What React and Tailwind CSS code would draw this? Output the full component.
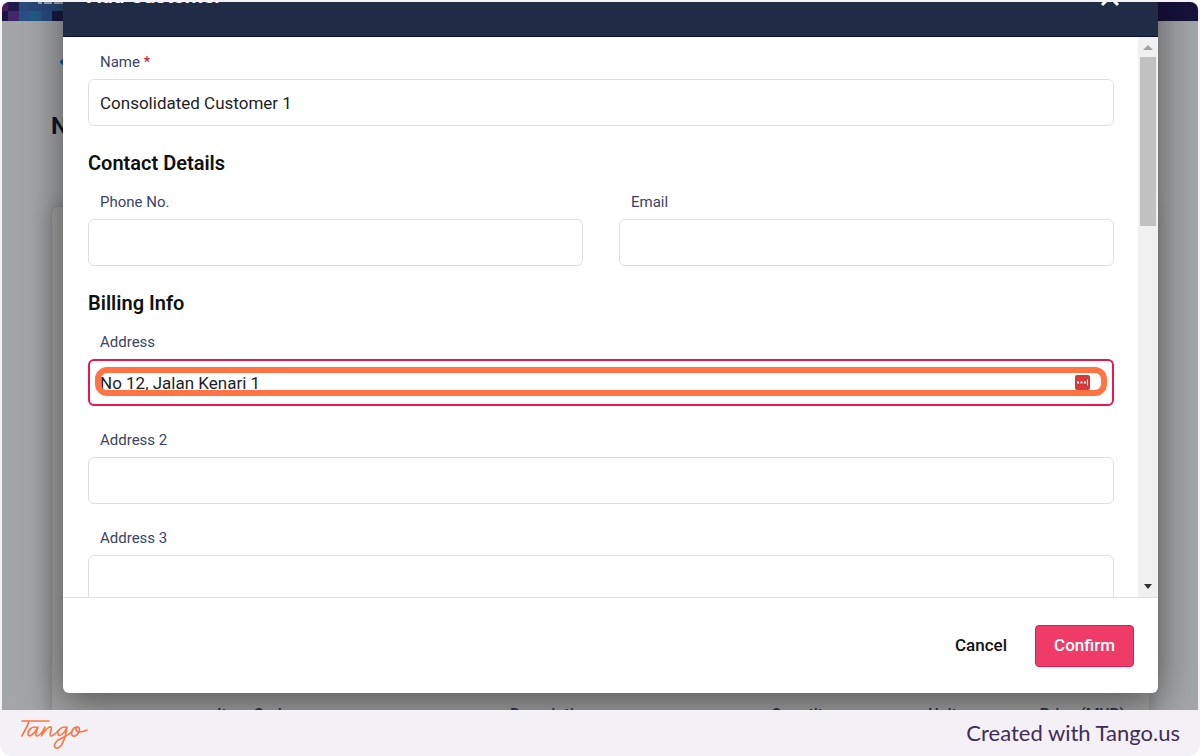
import { useState } from 'react';

const itemColumns = [
  { label: 'Item Code', className: 'w-[288px] pl-[165px] text-left' },
  { label: 'Description', className: 'w-[260px] pl-[170px] text-left' },
  { label: 'Quantity', className: 'text-right' },
  { label: 'Unit', className: 'w-[126px] text-right' },
  { label: 'Price (MYR)', className: 'w-[192px] pr-6 text-right' }
];

const bannerTiles = [
  { x: 0, y: 0, fill: '#4a1d58' },
  { x: 6, y: 0, fill: '#1f1a4e' },
  { x: 17, y: 0, fill: '#284a7d' },
  { x: 28, y: 0, fill: '#27487c' },
  { x: 39, y: 0, fill: '#27477c' },
  { x: 50, y: 0, fill: '#254a78' },
  { x: 0, y: 9, fill: '#1b1546' },
  { x: 6, y: 9, fill: '#44276a' },
  { x: 17, y: 9, fill: '#285184' },
  { x: 28, y: 9, fill: '#245a87' },
  { x: 39, y: 9, fill: '#264c80' },
  { x: 50, y: 9, fill: '#191845' }
];

function Banner() {
  return (
    <div className="h-[19px] shrink-0 overflow-hidden bg-[#16123c]">
      <svg width="61" height="19" aria-hidden="true">
        {bannerTiles.map((tile) => (
          <rect key={`${tile.x}-${tile.y}`} x={tile.x} y={tile.y} width="12" height="10" fill={tile.fill} />
        ))}
        <path d="M36 0h4v2h-4zM42 0h8v2h-8zM52 0h9v2h-9z" fill="#9aa5b8" />
      </svg>
    </div>
  );
}

function BackgroundPage() {
  return (
    <div className="flex h-full flex-col bg-[#a3a5a7]">
      <Banner />
      <div className="flex grow flex-col pr-12 pl-[49px]">
        <a href="#back" aria-label="Back" className="mt-[33px] ml-[9px] flex h-4 w-4 items-center">
          <svg width="16" height="10" viewBox="0 0 16 10" aria-hidden="true">
            <path d="M5 1 1 5l4 4M1 5h14" fill="none" stroke="#0b4f9c" strokeWidth="2" />
          </svg>
        </a>
        <h1 className="mt-10 text-2xl leading-8 font-bold text-[#10152b]">New Invoice</h1>
        <div className="mt-16 grow rounded-t-md border border-b-0 border-[#8f9092] bg-[#a2a2a2] pt-[496px] shadow-[0_0_20px_rgba(0,0,0,0.2)]">
          <table className="w-full table-fixed text-base leading-6 text-[#2e3452]">
            <thead>
              <tr>
                {itemColumns.map((column) => (
                  <th key={column.label} className={`font-medium whitespace-nowrap ${column.className}`}>
                    {column.label}
                  </th>
                ))}
              </tr>
            </thead>
          </table>
        </div>
      </div>
    </div>
  );
}

function Field({ id, label, value, onChange, required, focused, children }) {
  return (
    <div className="flex min-w-0 flex-1 flex-col gap-1">
      <label htmlFor={id} className="pl-3 text-[15px] leading-[26px] text-[#3a4466]">
        {label}
        {required ? <span className="text-[#c8102e]"> *</span> : null}
      </label>
      <div className="relative">
        <input
          id={id}
          type="text"
          value={value}
          onChange={(event) => onChange(id, event.target.value)}
          className={`block h-[47px] w-full rounded-md bg-white text-[17px] text-[#1d1d1f] outline-none ${
            focused ? 'border-2 border-[#e8174f] px-[10px]' : 'border border-[#dfe0e2] px-[11px]'
          }`}
        />
        {children}
      </div>
    </div>
  );
}

function PasswordManagerBadge() {
  return (
    <svg width="15" height="15" viewBox="0 0 15 15" className="absolute top-4 right-6" aria-hidden="true">
      <rect width="15" height="15" rx="2" fill="#d63a3a" />
      <path d="M2 6.500h2v2H2zM5.500 6.500h2v2h-2zM9 6.500h2v2H9z" fill="#fff" />
      <path d="M12.500 4.500v6" stroke="#fff" strokeWidth="1" />
    </svg>
  );
}

function ScrollTrack() {
  return (
    <div className="flex w-5 shrink-0 flex-col justify-between bg-[#f0f0f0] pl-[2px]" aria-hidden="true">
      <div className="flex w-4 flex-col items-center">
        <svg width="10" height="20" viewBox="0 0 10 20">
          <path d="M0 13h10L5 8z" fill="#a0a0a0" />
        </svg>
        <div className="h-[169px] w-4 bg-[#c1c1c1]" />
      </div>
      <div className="flex w-4 justify-center">
        <svg width="10" height="20" viewBox="0 0 10 20">
          <path d="M1 7h8l-4 5z" fill="#333" />
        </svg>
      </div>
    </div>
  );
}

function AddCustomerModal() {
  const [form, setForm] = useState({
    name: 'Consolidated Customer 1',
    phone: '',
    email: '',
    address: 'No 12, Jalan Kenari 1',
    address2: '',
    address3: ''
  });

  function handleChange(id, value) {
    setForm((current) => ({ ...current, [id]: value }));
  }

  return (
    <div
      role="dialog"
      aria-label="Add Customer"
      className="absolute -top-[45px] right-10 bottom-[17px] left-[61px] flex flex-col rounded-md bg-white shadow-[0_8px_40px_rgba(0,0,0,0.5)]"
    >
      <header className="flex h-20 shrink-0 items-center justify-between border-b border-[#0a1038] bg-[#222b45] px-6 text-white">
        <h2 className="text-[21px] font-semibold">Add Customer</h2>
        <button type="button" aria-label="Close" className="mr-[14px]">
          <svg width="20" height="20" viewBox="0 0 20 20" aria-hidden="true">
            <path d="M2 2l16 16M18 2 2 18" stroke="#fff" strokeWidth="3" />
          </svg>
        </button>
      </header>

      <div className="flex min-h-0 flex-1">
        <form className="flex min-w-0 flex-1 flex-col gap-[23px] overflow-hidden pt-3 pr-6 pl-[25px]">
          <Field id="name" label="Name" value={form.name} onChange={handleChange} required />

          <section className="flex flex-col gap-3">
            <h3 className="text-xl leading-7 font-semibold text-[#111]">Contact Details</h3>
            <div className="flex gap-9">
              <Field id="phone" label="Phone No." value={form.phone} onChange={handleChange} />
              <Field id="email" label="Email" value={form.email} onChange={handleChange} />
            </div>
          </section>

          <section className="flex flex-col gap-3">
            <h3 className="text-xl leading-7 font-semibold text-[#111]">Billing Info</h3>
            <div className="flex flex-col gap-[21px]">
              <Field id="address" label="Address" value={form.address} onChange={handleChange} focused>
                <PasswordManagerBadge />
                <div className="pointer-events-none absolute inset-x-[7px] top-2 h-[29px] rounded-xl border-6 border-[#ff7442]" />
              </Field>
              <Field id="address2" label="Address 2" value={form.address2} onChange={handleChange} />
              <Field id="address3" label="Address 3" value={form.address3} onChange={handleChange} />
            </div>
          </section>
        </form>
        <ScrollTrack />
      </div>

      <footer className="flex h-24 shrink-0 items-center justify-end gap-7 border-t border-[#dfe0e2] px-6 text-[17px] font-medium">
        <button type="button" className="text-[#111]">
          Cancel
        </button>
        <button type="button" className="h-[42px] rounded-sm border border-[#e8174f] bg-[#ee3b68] px-[18px] text-white">
          Confirm
        </button>
      </footer>
    </div>
  );
}

function TangoLogo() {
  return (
    <svg width="68" height="32" viewBox="0 0 68 32" fill="none" stroke="#ff7442" strokeWidth="1.6" strokeLinecap="round" strokeLinejoin="round" role="img" aria-label="Tango" className="mt-1">
      <path d="M2 2H29M9 2C8 7 4 12 2 17" />
      <path d="M17 9C13 6 8 11 8 15C8 19 14 16 18 8C16 13 15 17 17 17C20 17 23 12 25 8C24 12 22 15 21.500 17C24 12 29 7 31 8C33 9 28 16 31 17C34 17 37 13 39 11" />
      <path d="M47 9C43 6 37 11 38 15C39 19 45 14 47 8C46 16 43 27 38 29C34 30 33 26 37 22C42 18 50 17 53 11" />
      <path d="M57 8C52 8 50 16 53 17C57 18 62 10 58 8C54 8 56 14 60 13C63 13 65 12 67 11" />
    </svg>
  );
}

export default function App() {
  return (
    <div className="h-screen bg-white font-[Roboto,sans-serif]">
      <div className="flex h-full flex-col overflow-hidden rounded-xl bg-[#f3f0f6] px-[2px] pt-[2px]">
        <main className="relative min-h-0 flex-1 overflow-hidden rounded-t-lg">
          <BackgroundPage />
          <AddCustomerModal />
        </main>
        <footer className="flex h-[46px] shrink-0 items-center justify-between px-[18px]">
          <TangoLogo />
          <p className="font-[Lato,sans-serif] text-[22px] leading-7 text-[#412c58]">Created with Tango.us</p>
        </footer>
      </div>
    </div>
  );
}
